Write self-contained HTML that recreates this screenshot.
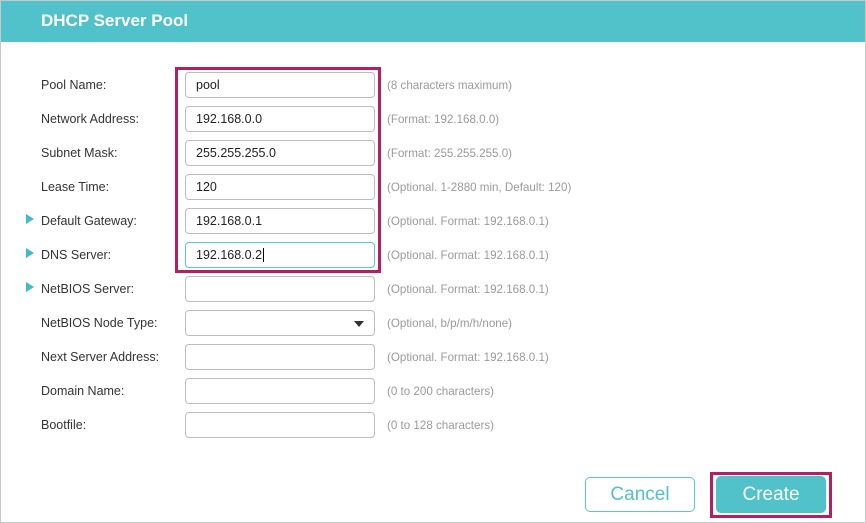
<!DOCTYPE html>
<html><head><meta charset="utf-8"><style>
*{margin:0;padding:0;box-sizing:border-box}
body{width:866px;height:523px;background:#fff;font-family:"Liberation Sans",Arial,sans-serif;position:relative;overflow:hidden}
.frame{position:absolute;left:0;top:0;width:866px;height:523px;border:1px solid #c8c8c8}
.hdr{position:absolute;left:1px;top:1px;width:864px;height:41px;background:#51c1ca;color:#fff;font-size:17px;font-weight:bold;line-height:40px;padding-left:40px}
.lab{position:absolute;left:41px;font-size:12.5px;color:#333}
.inp{position:absolute;left:185px;width:190px;height:26px;border:1px solid #bdbdbd;border-radius:4px;font-size:12.5px;color:#222;padding-left:10px;line-height:24px}
.hint{position:absolute;left:387px;font-size:11.6px;color:#9a9a9a;margin-top:1px}
.arr{position:absolute;left:26px;width:0;height:0;border-left:8px solid #3fbcc8;border-top:5px solid transparent;border-bottom:5px solid transparent}
.red{position:absolute;border:3px solid #b41e63}
.btn{position:absolute;border-radius:5px;font-size:19px;text-align:center}
</style></head><body>
<div class="frame"></div>
<div class="hdr">DHCP Server Pool</div>

<div class="lab" style="top:78px">Pool Name:</div>
<div class="inp" style="top:72px">pool</div>
<div class="hint" style="top:78px">(8 characters maximum)</div>

<div class="lab" style="top:112px">Network Address:</div>
<div class="inp" style="top:106px">192.168.0.0</div>
<div class="hint" style="top:112px">(Format: 192.168.0.0)</div>

<div class="lab" style="top:146px">Subnet Mask:</div>
<div class="inp" style="top:140px">255.255.255.0</div>
<div class="hint" style="top:146px">(Format: 255.255.255.0)</div>

<div class="lab" style="top:180px">Lease Time:</div>
<div class="inp" style="top:174px">120</div>
<div class="hint" style="top:180px">(Optional. 1-2880 min, Default: 120)</div>

<div class="arr" style="top:214px"></div>
<div class="lab" style="top:214px">Default Gateway:</div>
<div class="inp" style="top:208px">192.168.0.1</div>
<div class="hint" style="top:214px">(Optional. Format: 192.168.0.1)</div>

<div class="arr" style="top:248px"></div>
<div class="lab" style="top:248px">DNS Server:</div>
<div class="inp" style="top:242px;border-color:#5ac6ce">192.168.0.2<span style="border-left:1px solid #000;margin-left:1px"></span></div>
<div class="hint" style="top:248px">(Optional. Format: 192.168.0.1)</div>

<div class="arr" style="top:282px"></div>
<div class="lab" style="top:282px">NetBIOS Server:</div>
<div class="inp" style="top:276px"></div>
<div class="hint" style="top:282px">(Optional. Format: 192.168.0.1)</div>

<div class="lab" style="top:316px">NetBIOS Node Type:</div>
<div class="inp" style="top:310px"><div style="position:absolute;right:10px;top:10px;width:0;height:0;border-top:6px solid #333;border-left:5px solid transparent;border-right:5px solid transparent"></div></div>
<div class="hint" style="top:316px">(Optional, b/p/m/h/none)</div>

<div class="lab" style="top:350px">Next Server Address:</div>
<div class="inp" style="top:344px"></div>
<div class="hint" style="top:350px">(Optional. Format: 192.168.0.1)</div>

<div class="lab" style="top:384px">Domain Name:</div>
<div class="inp" style="top:378px"></div>
<div class="hint" style="top:384px">(0 to 200 characters)</div>

<div class="lab" style="top:418px">Bootfile:</div>
<div class="inp" style="top:412px"></div>
<div class="hint" style="top:418px">(0 to 128 characters)</div>

<div class="red" style="left:175px;top:67px;width:206px;height:206px"></div>

<div class="btn" style="left:585px;top:477px;width:110px;height:35px;border:1px solid #5ac6ce;color:#51c1ca;line-height:33px">Cancel</div>
<div class="btn" style="left:716px;top:476px;width:110px;height:37px;background:#51c1ca;color:#fff;line-height:37px">Create</div>
<div class="red" style="left:710px;top:472px;width:122px;height:46px"></div>
</body></html>
